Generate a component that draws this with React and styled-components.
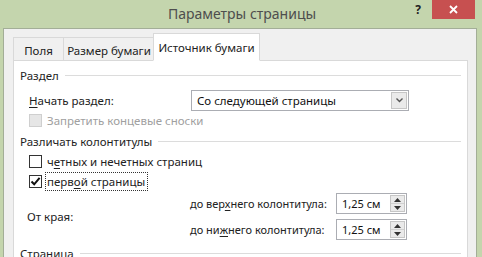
import React from 'react';
import styled, { createGlobalStyle } from 'styled-components';

const GlobalStyle = createGlobalStyle`
  html, body {
    margin: 0;
    padding: 0;
    background: #c4d5ad;
  }
  body {
    font-family: 'Noto Sans', 'Open Sans', sans-serif;
    font-size: 11px;
    color: #000;
    white-space: nowrap;
  }
`;

const Frame = styled.div`
  width: 482px;
  height: 257px;
  overflow: hidden;
  background: #c4d5ad;
  display: flex;
  flex-direction: column;
  padding: 0 5px 0 3px;
  box-sizing: border-box;
`;

const TitleBar = styled.div`
  height: 28px;
  flex: none;
  display: flex;
  align-items: flex-start;
`;

const Title = styled.div`
  flex: 1;
  text-align: center;
  font-size: 14px;
  color: #4e4e4e;
  line-height: 28px;
  padding-left: 77px;
`;

const HelpButton = styled.div`
  width: 14px;
  margin-top: 2px;
  margin-left: 7px;
  font-size: 12px;
  font-weight: bold;
  color: #222;
  line-height: 16px;
  text-align: center;
`;

const CloseButton = styled.div`
  width: 43px;
  height: 19px;
  margin-left: 7px;
  margin-right: 2px;
  background: #c75050;
  color: #fff;
  display: flex;
  align-items: center;
  justify-content: center;
`;

const Client = styled.div`
  flex: 1;
  background: #f0f0f0;
  border-left: 1px solid #a3ae97;
  border-right: 1px solid #a3ae97;
  border-top: 1px solid #a3ae97;
  padding: 4px 8px 0 9px;
  display: flex;
  flex-direction: column;
`;

const TabRow = styled.div`
  display: flex;
  align-items: flex-end;
  height: 28px;
  flex: none;
  position: relative;
  z-index: 1;
  margin-bottom: -1px;
`;

const Tab = styled.div`
  height: ${p => (p.$active ? 28 : 24)}px;
  box-sizing: border-box;
  border: 1px solid #d9d9d9;
  border-bottom: ${p => (p.$active ? '1px solid #fff' : '1px solid #d9d9d9')};
  margin-left: ${p => (p.$active ? -2 : p.$first ? 0 : -1)}px;
  background: ${p => (p.$active ? '#fff' : '#f0f0f0')};
  display: flex;
  align-items: center;
  justify-content: center;
  padding-top: ${p => (p.$active ? 0 : 2)}px;
  width: ${p => p.$w}px;
  position: relative;
  z-index: ${p => (p.$active ? 2 : 1)};
  color: #222;
  font-size: 11.5px;
`;

const Panel = styled.div`
  flex: 1;
  background: #fff;
  border: 1px solid #d9d9d9;
  border-bottom: none;
  padding: 4px 6px 0 6px;
  display: flex;
  flex-direction: column;
`;

const GroupHeader = styled.div`
  display: flex;
  align-items: center;
  gap: 6px;
  height: 20px;
  margin-top: ${p => p.$mt || 0}px;
  color: #1e1e1e;
  font-size: 11.5px;
  &::after {
    content: '';
    flex: 1;
    height: 1px;
    background: #dcdcdc;
  }
`;

const Row = styled.div`
  display: flex;
  align-items: center;
  height: ${p => p.$h || 20}px;
  padding-left: 9px;
  margin-top: ${p => p.$mt || 0}px;
`;

const FieldLabel = styled.div`
  width: 162px;
  color: #222;
  font-size: 11.5px;
`;

const U = styled.span`
  text-decoration: underline;
  text-underline-offset: 2px;
`;

const Select = styled.div`
  width: 218px;
  height: 21px;
  box-sizing: border-box;
  border: 1px solid #abadb3;
  display: flex;
  align-items: center;
  padding: 1px;
`;

const SelectText = styled.div`
  flex: 1;
  padding-left: 4px;
  color: #111;
  font-size: 11.5px;
`;

const ArrowBox = styled.div`
  width: 16px;
  height: 100%;
  box-sizing: border-box;
  border: 1px solid #c6c6c6;
  background: #eaeaea;
  display: flex;
  align-items: center;
  justify-content: center;
`;

const Box = styled.div`
  width: 11px;
  height: 11px;
  border: 1px solid ${p => (p.$disabled ? '#cfcfcf' : '#333')};
  background: ${p => (p.$disabled ? '#e6e6e6' : '#fff')};
  display: flex;
  align-items: center;
  justify-content: center;
  flex: none;
`;

const CheckText = styled.div`
  margin-left: 3px;
  padding: 1px 2px 1px 1px;
  color: ${p => (p.$disabled ? '#a0a0a0' : '#222')};
  border: 1px dotted ${p => (p.$focus ? '#333' : 'transparent')};
  font-size: 11.5px;
`;

const MarginBlock = styled.div`
  display: flex;
  align-items: center;
  padding-left: 7px;
  margin-top: 2px;
`;

const MarginLabel = styled.div`
  width: 163px;
  color: #222;
  font-size: 11.5px;
`;

const SpinRows = styled.div`
  display: flex;
  flex-direction: column;
  gap: 5px;
`;

const SpinRow = styled.div`
  display: flex;
  align-items: center;
`;

const SpinLabel = styled.div`
  width: 146px;
  color: #222;
`;

const Spin = styled.div`
  width: 71px;
  height: 21px;
  box-sizing: border-box;
  border: 1px solid #abadb3;
  display: flex;
  align-items: center;
  padding: 1px;
`;

const SpinText = styled.div`
  flex: 1;
  padding-left: 4px;
  color: #111;
`;

const SpinBtns = styled.div`
  width: 15px;
  height: 100%;
  box-sizing: border-box;
  border: 1px solid #c6c6c6;
  background: #eaeaea;
  display: flex;
  flex-direction: column;
`;

const SpinHalf = styled.div`
  flex: 1;
  display: flex;
  align-items: center;
  justify-content: center;
  & + & {
    border-top: 1px solid #d0d0d0;
  }
`;

const Chevron = () => (
  <svg width="7" height="5" viewBox="0 0 7 5">
    <path d="M0.5 0.5 L3.5 3.5 L6.5 0.5" fill="none" stroke="#555" strokeWidth="1.4" />
  </svg>
);

const Tri = ({ up }) => (
  <svg width="7" height="4" viewBox="0 0 7 4">
    <path d={up ? 'M0 4 L3.5 0 L7 4 Z' : 'M0 0 L3.5 4 L7 0 Z'} fill="#333" />
  </svg>
);

const Tick = () => (
  <svg width="11" height="11" viewBox="0 0 11 11">
    <path d="M1.5 5.5 L4.2 8.3 L9.6 1.8" fill="none" stroke="#111" strokeWidth="2" />
  </svg>
);

const SpinBox = ({ value }) => (
  <Spin>
    <SpinText>{value}</SpinText>
    <SpinBtns>
      <SpinHalf><Tri up /></SpinHalf>
      <SpinHalf><Tri /></SpinHalf>
    </SpinBtns>
  </Spin>
);

export default function App() {
  return (
    <>
      <GlobalStyle />
      <Frame>
        <TitleBar>
          <Title>Параметры страницы</Title>
          <HelpButton>?</HelpButton>
          <CloseButton>
            <svg width="9" height="9" viewBox="0 0 9 9">
              <path d="M1 1 L8 8 M8 1 L1 8" stroke="#fff" strokeWidth="1.8" />
            </svg>
          </CloseButton>
        </TitleBar>
        <Client>
          <TabRow>
            <Tab $first $w={51}>Поля</Tab>
            <Tab $w={92}>Размер бумаги</Tab>
            <Tab $active $w={107}>Источник бумаги</Tab>
          </TabRow>
          <Panel>
            <GroupHeader>Раздел</GroupHeader>
            <Row $mt={4} $h={22}>
              <FieldLabel><U>Н</U>ачать раздел:</FieldLabel>
              <Select>
                <SelectText>Со следующей страницы</SelectText>
                <ArrowBox><Chevron /></ArrowBox>
              </Select>
            </Row>
            <Row $h={18}>
              <Box $disabled />
              <CheckText $disabled>Запретить концевые сноски</CheckText>
            </Row>
            <GroupHeader $mt={2}>Различать колонтитулы</GroupHeader>
            <Row $h={20}>
              <Box />
              <CheckText>ч<U>е</U>тных и нечетных страниц</CheckText>
            </Row>
            <Row $h={20}>
              <Box><Tick /></Box>
              <CheckText $focus>перв<U>о</U>й страницы</CheckText>
            </Row>
            <MarginBlock>
              <MarginLabel>От края:</MarginLabel>
              <SpinRows>
                <SpinRow>
                  <SpinLabel>до вер<U>х</U>него колонтитула:</SpinLabel>
                  <SpinBox value="1,25 см" />
                </SpinRow>
                <SpinRow>
                  <SpinLabel>до ни<U>ж</U>него колонтитула:</SpinLabel>
                  <SpinBox value="1,25 см" />
                </SpinRow>
              </SpinRows>
            </MarginBlock>
            <GroupHeader $mt={3}>Страница</GroupHeader>
          </Panel>
        </Client>
      </Frame>
    </>
  );
}
